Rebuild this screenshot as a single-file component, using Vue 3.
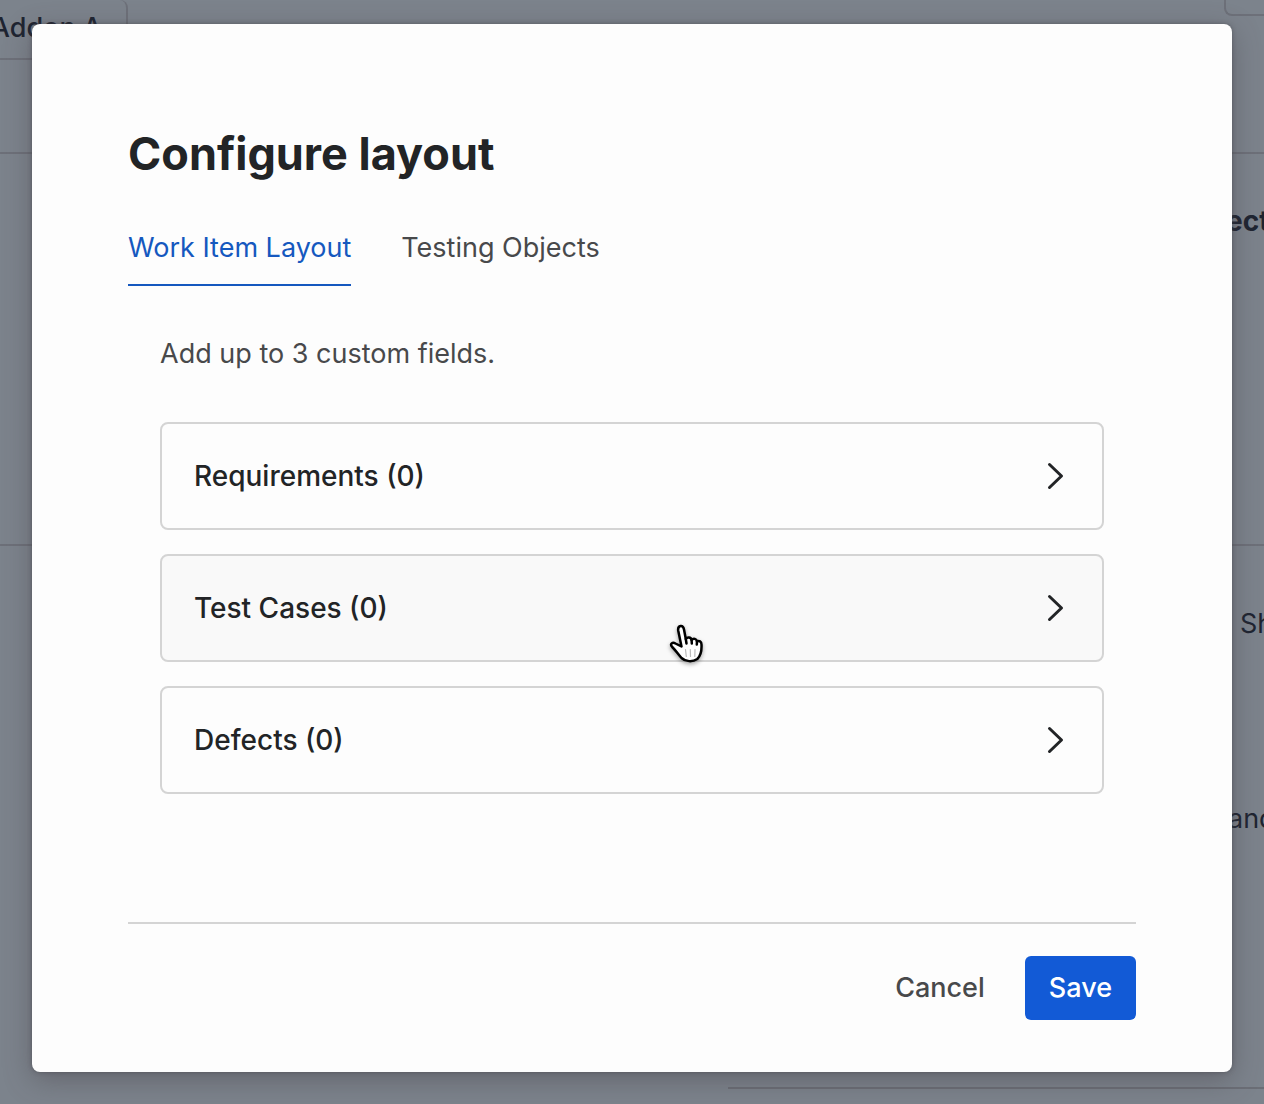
<script setup>
import { ref } from 'vue'

const tabs = ['Work Item Layout', 'Testing Objects']
const activeTab = ref(0)

const groups = [
  { name: 'Requirements', count: 0 },
  { name: 'Test Cases', count: 0, hovered: true },
  { name: 'Defects', count: 0 },
]
</script>

<template>
  <div class="screen">
    <div class="page" aria-hidden="true">
      <header class="band topbar">
        <div class="addon">Addon A</div>
        <div class="corner"></div>
      </header>
      <section class="band summary">
        <h2 class="summary-title">ect</h2>
      </section>
      <section class="details">
        <p class="note note-inset">Sh</p>
        <p class="note note-last">and</p>
        <div class="rule"></div>
      </section>
    </div>

    <div class="overlay">
      <div class="dialog" role="dialog" aria-modal="true" aria-labelledby="dialog-title">
        <h1 id="dialog-title">Configure layout</h1>

        <div class="tabs" role="tablist">
          <button
            v-for="(tab, i) in tabs"
            :key="tab"
            type="button"
            role="tab"
            class="tab"
            :class="{ active: activeTab === i }"
            :aria-selected="activeTab === i"
            @click="activeTab = i"
          >{{ tab }}</button>
        </div>

        <div class="body">
          <p class="intro">Add up to 3 custom fields.</p>
          <div class="groups">
            <button
              v-for="group in groups"
              :key="group.name"
              type="button"
              class="group"
              :class="{ hovered: group.hovered }"
            >
              <span>{{ group.name }} ({{ group.count }})</span>
              <svg class="chevron" viewBox="0 0 32 32" aria-hidden="true">
                <path d="M11.5 4.5 23.5 16 11.5 27.5" />
              </svg>
              <svg v-if="group.hovered" class="pointer" viewBox="0 0 44 48" aria-hidden="true">
                <path
                  class="hand"
                  d="M17.5 26.5 L14.2 10.5 C13.6 5.200 19 4.300 20 9.500 L21.800 19 C23.200 16.800 27 17 27.600 20 C29.400 17.900 32.600 18.700 33 21.500 C35.200 20.200 37.500 21.500 37.500 24.500 C37.800 30 36.600 36 33.300 39 C28.500 42.200 21.500 41.800 17.500 38 C14.200 34.500 11.800 30.500 8.200 27 C5.500 23.800 8.500 21.800 11.500 23.500 Z"
                />
                <path class="knuckles" d="M21.800 19 22.500 23.500M27.600 20 27.800 23.500M33 21.500 32.800 24.500" />
                <path class="creases" d="M21.500 29.500 22.300 36.500M26.300 29.500 26.500 36.500M31 29.500 30.800 36.500" />
              </svg>
            </button>
          </div>
        </div>

        <footer class="actions">
          <button type="button" class="action">Cancel</button>
          <button type="button" class="action primary">Save</button>
        </footer>
      </div>
    </div>
  </div>
</template>

<style>
body {
  background: #7c838c;
}
</style>

<style scoped>
.screen {
  position: relative;
  min-height: 100vh;
  overflow: hidden;
  font-family: Inter, "Liberation Sans", sans-serif;
  font-size: 27px;
  line-height: 40px;
  color: #222426;
}

.screen *,
.screen {
  box-sizing: border-box;
}

h1,
h2,
p {
  margin: 0;
}

button {
  font: inherit;
  color: inherit;
  background: none;
  border: 0;
  padding: 0;
  cursor: pointer;
}

.page {
  color: #1e2431;
}

.band {
  border-bottom: 2px solid #6d7079;
}

.topbar {
  display: flex;
  justify-content: space-between;
  align-items: flex-start;
  height: 154px;
}

.addon {
  width: 128px;
  padding: 8px 24px 10px 0;
  border: solid #6d7079;
  border-width: 0 2px 2px 0;
  border-top-right-radius: 8px;
  font-weight: 500;
  white-space: nowrap;
  direction: rtl;
}

.corner {
  width: 40px;
  height: 16px;
  border: solid #6d7079;
  border-width: 0 0 2px 2px;
  border-bottom-left-radius: 8px;
}

.summary {
  display: flex;
  justify-content: flex-end;
  height: 392px;
  padding-top: 47px;
}

.summary-title {
  width: 38px;
  font-size: 28px;
  font-weight: 700;
}

.details {
  display: flex;
  flex-direction: column;
  align-items: flex-end;
  padding-top: 58px;
}

.note {
  width: 36px;
}

.note-inset {
  width: 24px;
}

.note-last {
  margin-top: 155px;
}

.rule {
  align-self: stretch;
  margin-top: 248px;
  margin-left: 728px;
  border-top: 2px solid #6b6e76;
}

.overlay {
  position: absolute;
  inset: 0;
  padding: 24px 32px 32px;
}

.dialog {
  padding: 96px 96px 52px;
  background: #fdfdfd;
  border-radius: 8px;
  box-shadow: 0 8px 28px rgba(70, 65, 70, 0.45), 0 0 4px rgba(60, 60, 65, 0.5);
}

h1 {
  font-size: 45px;
  line-height: 68px;
  font-weight: 700;
}

.tabs {
  display: flex;
  gap: 50px;
  margin-top: 40px;
}

.tab {
  padding-bottom: 16px;
  border-bottom: 2px solid transparent;
  color: #48494b;
}

.tab.active {
  color: #1558bf;
  border-color: #1558bf;
}

.body {
  padding: 48px 32px 128px;
}

.intro {
  color: #48494b;
}

.groups {
  display: flex;
  flex-direction: column;
  gap: 24px;
  margin-top: 48px;
}

.group {
  position: relative;
  display: flex;
  align-items: center;
  justify-content: space-between;
  height: 108px;
  padding: 0 32px;
  border: 2px solid #d4d4d4;
  border-radius: 8px;
  font-size: 28px;
  font-weight: 500;
}

.group.hovered {
  background: #f9f9f9;
}

.chevron {
  width: 32px;
  height: 32px;
  fill: none;
  stroke: #222426;
  stroke-width: 3;
  stroke-linecap: round;
  stroke-linejoin: round;
}

.pointer {
  position: absolute;
  left: 502px;
  top: 64px;
  width: 44px;
  height: 48px;
  fill: none;
  stroke-linecap: round;
  stroke-linejoin: round;
  filter: drop-shadow(0 2px 2px rgba(0, 0, 0, 0.35));
}

.hand {
  fill: #fff;
  stroke: #000;
  stroke-width: 2.5;
}

.knuckles {
  stroke: #000;
  stroke-width: 2.5;
}

.creases {
  stroke: #bbb;
  stroke-width: 1.2;
}

.actions {
  display: flex;
  justify-content: flex-end;
  gap: 16px;
  padding-top: 32px;
  border-top: 2px solid #d4d4d4;
}

.action {
  padding: 12px 24px;
  border-radius: 6px;
  font-weight: 500;
  color: #48494b;
}

.action.primary {
  background: #125ad6;
  color: #fff;
}
</style>
